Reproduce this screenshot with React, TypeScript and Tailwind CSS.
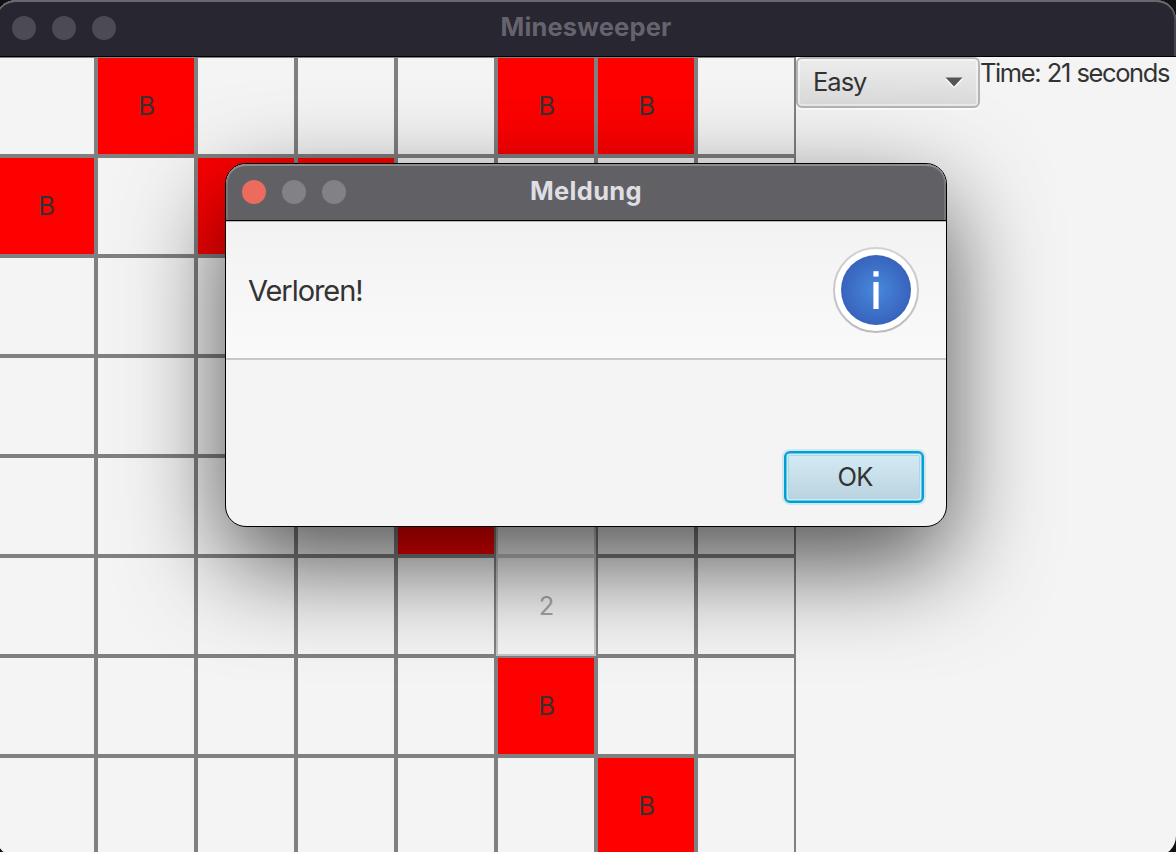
const COLUMNS = 8;

const ROWS = [
  ".B...BB.",
  "B.BB....",
  "........",
  "........",
  "....Bo..",
  ".....2..",
  ".....B..",
  "......B.",
];

function Cell({ value }: { value: string }) {
  if (value === "B") {
    return (
      <button className="flex size-[100px] items-center justify-center border-2 border-[#808080] bg-[#ff0000] pl-px">
        B
      </button>
    );
  }
  if (value === ".") {
    return <button className="size-[100px] border-2 border-[#808080] bg-[#f4f4f4]" />;
  }
  return (
    <button
      disabled
      className="flex size-[100px] items-center justify-center border-2 border-[#808080] pl-px opacity-40"
    >
      {value === "o" ? "" : value}
    </button>
  );
}

function Board() {
  return (
    <div className="-mt-px grid h-[800px] w-[800px] shrink-0 grid-cols-[repeat(8,100px)]">
      {ROWS.flatMap((row, y) =>
        row.split("").map((value, x) => <Cell key={y * COLUMNS + x} value={value} />)
      )}
    </div>
  );
}

function LevelSelect() {
  return (
    <button className="flex h-[51px] w-[184px] shrink-0 items-center justify-between rounded-[6px] border-2 border-[#b5b5b5] bg-linear-to-b from-[#ececec] to-[#dadada] pr-[15px] pl-[15px] shadow-[inset_0_0_0_2px_#ffffff70,0_2px_0_#fcfcfc]">
      <span className="pb-[2px] tracking-[-1px]">Easy</span>
      <svg className="h-[11px] w-[18px]" viewBox="0 0 18 11">
        <path d="M0 2h18L9 11z" fill="#fff" />
        <path d="M0.5 0.5h17L9 9.5z" fill="#555" />
      </svg>
    </button>
  );
}

function InfoIcon() {
  return (
    <svg className="size-[86px]" viewBox="0 0 86 86">
      <defs>
        <radialGradient id="info-blue">
          <stop offset="0" stopColor="#4789dc" />
          <stop offset="1" stopColor="#3863bd" />
        </radialGradient>
        <linearGradient id="info-ring" x1="0" y1="0" x2="0" y2="1">
          <stop offset="0" stopColor="#d2d2d2" />
          <stop offset="1" stopColor="#bcbcbc" />
        </linearGradient>
      </defs>
      <circle cx="43" cy="43" r="42" fill="#fff" stroke="url(#info-ring)" strokeWidth="2" />
      <circle cx="43" cy="43" r="35" fill="url(#info-blue)" />
      <rect x="40.4" y="24.2" width="5.2" height="5.4" fill="#fff" />
      <rect x="40.4" y="35" width="5.2" height="27" fill="#fff" />
    </svg>
  );
}

function MessageDialog() {
  return (
    <div
      role="dialog"
      className="absolute top-[163px] left-[225px] flex h-[364px] w-[722px] flex-col overflow-hidden rounded-[21px] border border-black bg-[#f4f4f4] shadow-[0_36px_100px_rgba(0,0,0,0.68)]"
    >
      <header className="relative flex h-[57px] shrink-0 items-center justify-center rounded-t-[20px] border-b border-black bg-[#616065] pb-[2px] shadow-[inset_0_2px_0_#8b8b8e,inset_2px_0_0_#76767a,inset_-2px_0_0_#76767a]">
        <div className="absolute top-[16px] left-[16px] flex gap-4">
          <span className="size-6 rounded-full bg-[#ed6a5e]" />
          <span className="size-6 rounded-full bg-[#828186]" />
          <span className="size-6 rounded-full bg-[#828186]" />
        </div>
        <h2 className="text-[25.5px] font-bold tracking-[0.3px] text-[#dfdee3]">Meldung</h2>
      </header>
      <div className="flex h-[139px] shrink-0 items-center justify-between border-t border-b-2 border-t-[#b8b8b8] border-b-[#c8c8c8] bg-linear-to-b from-[#f2f2f2] to-[#fafafa] pr-[27px] pl-[22px]">
        <p className="text-[29px] tracking-[-1.05px]">Verloren!</p>
        <InfoIcon />
      </div>
      <div className="flex flex-1 items-end justify-end pr-[22px] pb-[23px]">
        <button className="flex h-[52px] w-[140px] items-center justify-center rounded-[6px] border-2 border-[#039ed3] bg-linear-to-b from-[#d5ecf5] to-[#b9d2de] pl-[2px] tracking-[-0.8px] shadow-[0_0_0_2px_#cfe8ee,inset_0_0_0_0.5px_#039ed3,inset_0_0_0_2px_#d0ecf5,inset_0_0_0_3px_#abd8e6]">
          OK
        </button>
      </div>
    </div>
  );
}

export default function App() {
  return (
    <div className="relative h-[852px] w-[1176px] overflow-hidden bg-[#111] font-['Inter',sans-serif] text-[25.5px] leading-none text-[#333]">
      <div className="-ml-1 flex h-[856px] w-[1180px] flex-col overflow-hidden rounded-[20px] bg-[#f4f4f4]">
        <header className="relative z-10 flex h-[57px] shrink-0 items-center justify-center rounded-t-[20px] border-b border-black bg-[#282630] pb-[2px] shadow-[inset_0_2px_0_#69686e,inset_-2px_0_0_#46454d]">
          <div className="absolute top-[16px] left-[16px] flex gap-4">
            <span className="size-6 rounded-full bg-[#4c4a54]" />
            <span className="size-6 rounded-full bg-[#4c4a54]" />
            <span className="size-6 rounded-full bg-[#4c4a54]" />
          </div>
          <h1 className="text-[25.5px] font-bold tracking-[0.15px] text-[#65636d]">Minesweeper</h1>
        </header>
        <main className="flex items-start">
          <Board />
          <LevelSelect />
          <p className="mt-[3px] whitespace-nowrap tracking-[-1.4px] [word-spacing:0.8px]">
            Time: 21 seconds
          </p>
        </main>
      </div>
      <MessageDialog />
    </div>
  );
}
